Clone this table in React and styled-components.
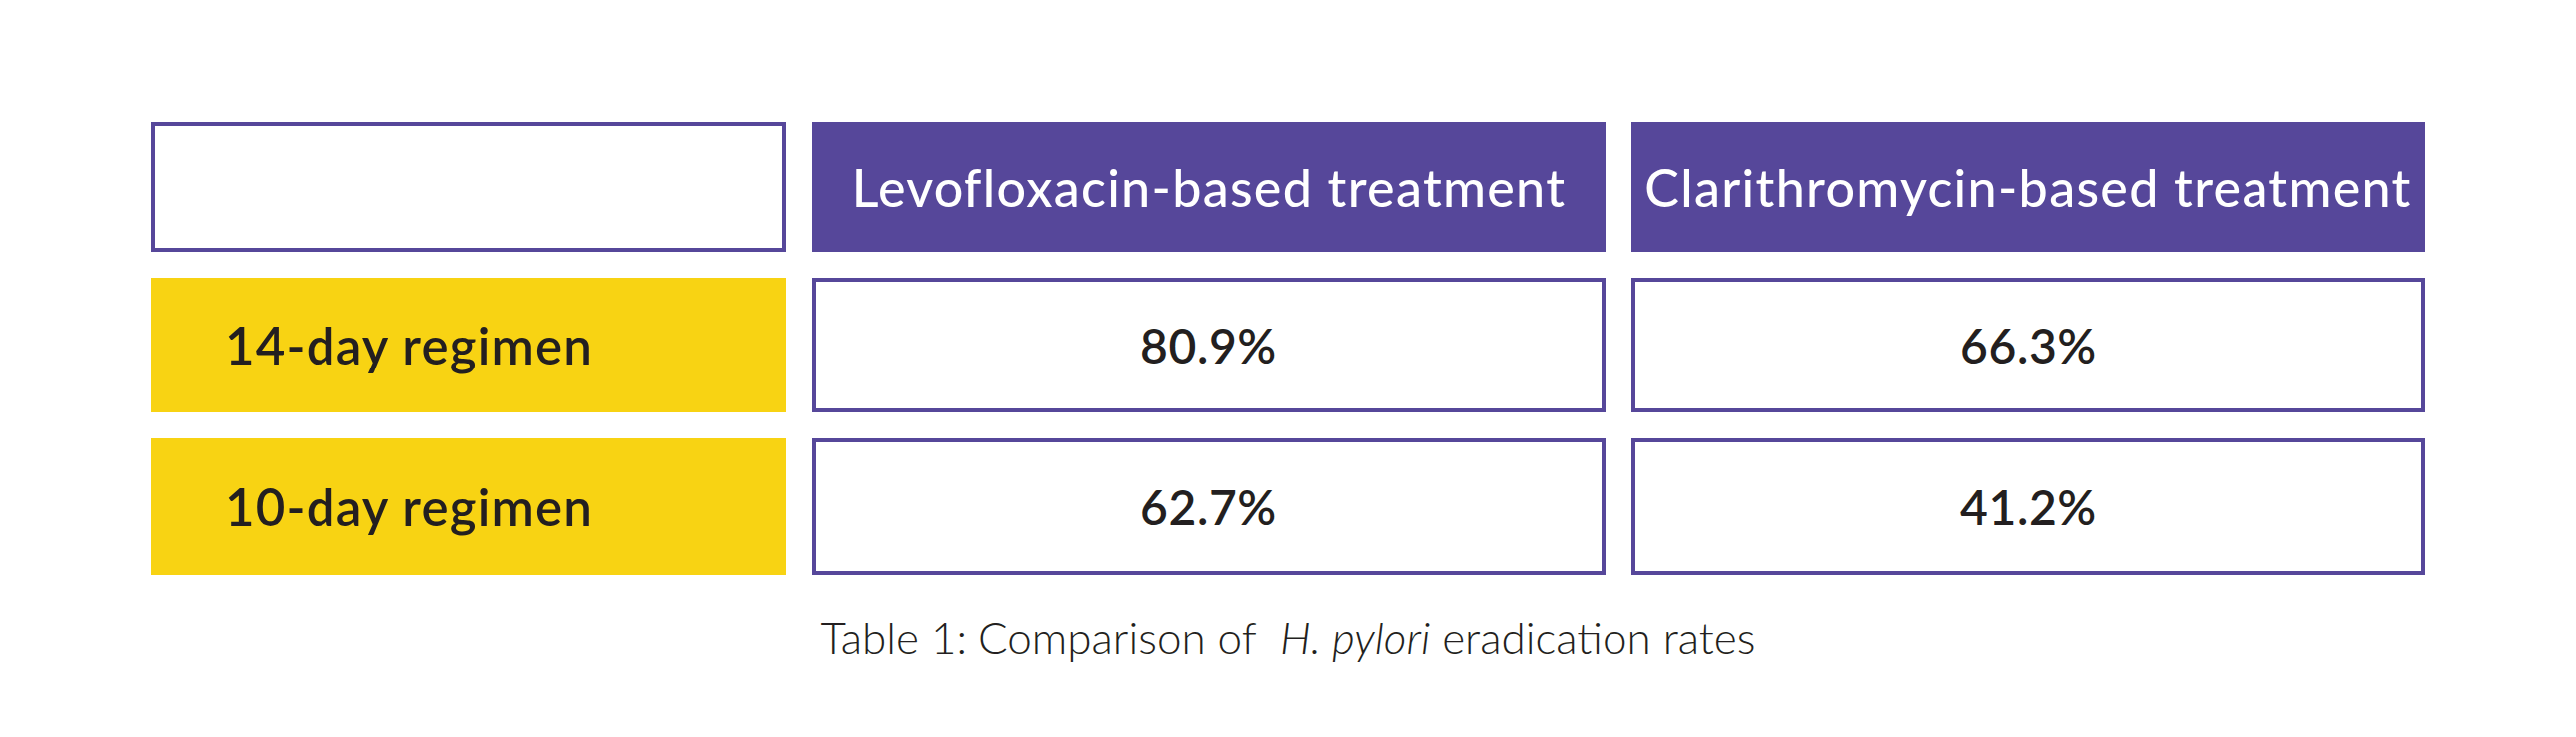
import styled, { createGlobalStyle } from 'styled-components';

const GlobalStyle = createGlobalStyle`
  html, body {
    margin: 0;
    padding: 0;
    background: #ffffff;
  }
  body {
    font-family: Lato, 'Open Sans', sans-serif;
  }
`;

const Page = styled.div`
  width: 2580px;
  height: 738px;
  padding-top: 122px;
  box-sizing: border-box;
  display: flex;
  flex-direction: column;
  align-items: center;
`;

const Table = styled.div`
  display: grid;
  grid-template-columns: 636px 795px 795px;
  grid-template-rows: 130px 135px 137px;
  column-gap: 26px;
  row-gap: 26px;
`;

const Cell = styled.div`
  box-sizing: border-box;
  display: flex;
  align-items: center;
  justify-content: ${(props) => (props.$left ? 'flex-start' : 'center')};
  padding-left: ${(props) => (props.$left ? '74px' : '0')};
  background: ${(props) => props.$bg || '#ffffff'};
  border: ${(props) => (props.$outline ? '4px solid #56479a' : 'none')};
  color: ${(props) => props.$color || '#231f20'};
  font-size: ${(props) => props.$size || '48px'};
  font-weight: ${(props) => props.$weight || 600};
  letter-spacing: ${(props) => props.$spacing || '0.6px'};
  white-space: nowrap;
`;

const Caption = styled.div`
  margin-top: 36px;
  font-size: 44px;
  font-weight: 300;
  color: #231f20;
  em {
    font-style: italic;
    margin-left: 12px;
  }
`;

const headers = ['Levofloxacin-based treatment', 'Clarithromycin-based treatment'];

const rows = [
  { label: '14-day regimen', values: ['80.9%', '66.3%'] },
  { label: '10-day regimen', values: ['62.7%', '41.2%'] },
];

const App = () => {
  return (
    <>
      <GlobalStyle />
      <Page>
        <Table>
          <Cell $outline />
          {headers.map((h) => (
            <Cell key={h} $bg='#56479a' $color='#ffffff' $size='52px' $weight={500} $spacing='1.3px'>
              {h}
            </Cell>
          ))}
          {rows.map((row) => (
            <>
              <Cell key={row.label} $left $bg='#f8d313' $size='51px' $spacing='1.2px'>
                {row.label}
              </Cell>
              {row.values.map((v) => (
                <Cell key={row.label + v} $outline>
                  {v}
                </Cell>
              ))}
            </>
          ))}
        </Table>
        <Caption>
          Table 1: Comparison of <em>H. pylori</em> eradication rates
        </Caption>
      </Page>
    </>
  );
};

export default App;
